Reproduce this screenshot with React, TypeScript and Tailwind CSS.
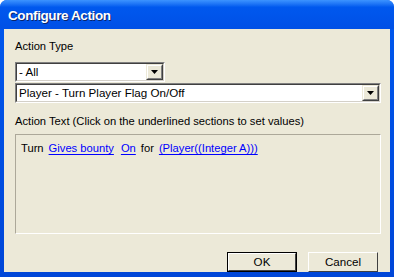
import { ReactNode } from 'react';

function DropArrow() {
  return (
    <div className="flex h-full w-[17px] items-stretch border-b border-r border-b-[#404040] border-r-[#404040] border-l border-t border-l-[#ECE9D8] border-t-[#ECE9D8]">
      <div className="flex flex-1 items-center justify-center border-b border-r border-b-[#808080] border-r-[#808080] border-l border-t border-l-white border-t-white bg-[#ECE9D8]">
        <svg width="7" height="4" viewBox="0 0 7 4">
          <path d="M0 0h7L3.5 4z" fill="#000" />
        </svg>
      </div>
    </div>
  );
}

function Combo({ value, className }: { value: string; className: string }) {
  return (
    <div className={`border-b border-r border-b-white border-r-white border-l border-t border-l-[#808080] border-t-[#808080] ${className}`}>
      <div className="flex h-full items-stretch border-b border-r border-b-[#D4D0C8] border-r-[#D4D0C8] border-l border-t border-l-[#404040] border-t-[#404040] bg-white">
        <div className="flex flex-1 items-center pl-[2px] text-[11.6px] leading-none text-black">{value}</div>
        <DropArrow />
      </div>
    </div>
  );
}

function Link({ children, className = '' }: { children: ReactNode; className?: string }) {
  return <span className={`text-[#0000FF] underline underline-offset-[2px] ${className}`}>{children}</span>;
}

function Button({ label, isDefault }: { label: string; isDefault?: boolean }) {
  return (
    <div className={`h-[20px] w-[70px] ${isDefault ? 'border border-black' : ''}`}>
      <div className="flex h-full items-center justify-center border-b border-r border-b-[#404040] border-r-[#404040] border-l border-t border-l-white border-t-white bg-[#ECE9D8] text-[11.6px] leading-none text-black">
        {label}
      </div>
    </div>
  );
}

export default function App() {
  return (
    <div className="h-[277px] w-[395px] bg-white font-['Liberation_Sans',Arial,sans-serif]">
      <div className="flex h-[277px] w-[394px] flex-col overflow-hidden rounded-t-[7px] bg-gradient-to-b from-[#0058EE] to-[#0046D8]">
        <div className="flex h-[30px] items-center bg-gradient-to-b from-[#3C93FF] via-[#0058EE] via-[25%] to-[#0050E6] pl-[8px] pt-[4px]">
          <span className="text-[13.5px] font-bold tracking-[-0.4px] text-white [text-shadow:1px_1px_0_#0A246A]">Configure Action</span>
        </div>
        <div className="mx-[4px] mb-[5px] flex flex-1 flex-col bg-[#ECE9D8] pl-[11px] pr-[9px] pt-[11px] text-[11.2px] text-black">
          <div className="leading-[13px]">Action Type</div>
          <Combo value="- All" className="mt-[9px] h-[20px] w-[150px]" />
          <Combo value="Player - Turn Player Flag On/Off" className="mt-[1px] h-[20px] w-[366px]" />
          <div className="mt-[12px] leading-[13px]">Action Text (Click on the underlined sections to set values)</div>
          <div className="mt-[6px] h-[100px] w-[366px] border-l border-t border-l-[#ACA899] border-t-[#ACA899] border-b border-r border-b-white border-r-white">
            <div className="flex gap-[5px] pl-[5px] pt-[7px] leading-[13px]">
              <span>Turn</span>
              <Link>Gives bounty</Link>
              <Link className="ml-[2px]">On</Link>
              <span>for</span>
              <Link>(Player((Integer A)))</Link>
            </div>
          </div>
          <div className="mt-[18px] flex justify-end gap-[11px] pr-[3px]">
            <Button label="OK" isDefault />
            <Button label="Cancel" />
          </div>
        </div>
      </div>
    </div>
  );
}
